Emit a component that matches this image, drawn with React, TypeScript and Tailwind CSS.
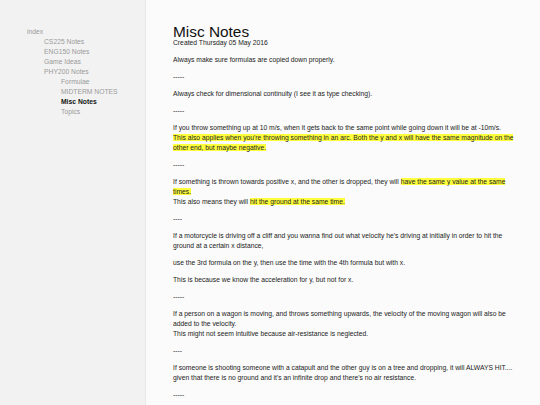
import React from 'react';

const Hl: React.FC<{ children: React.ReactNode }> = ({ children }) => (
    <span className="bg-[#ffff3c]">{children}</span>
);

const Sep: React.FC<{ text?: string }> = ({ text = '-----' }) => <p className="mt-[7px]">{text}</p>;

export default function App() {
    return (
        <div className="flex h-[405px] w-[540px] overflow-hidden bg-[#fbfbfb] font-['Liberation_Sans',Arial,sans-serif]">
            <aside className="w-[146px] shrink-0 border-r border-[#e8e8e8] bg-[#f2f2f2] pl-[27px] pt-[27px] text-[6.75px] leading-[10px] text-[#9a9a9a]">
                <div>index</div>
                <div className="ml-[17px]">
                    <div>CS225 Notes</div>
                    <div>ENG150 Notes</div>
                    <div>Game Ideas</div>
                    <div>PHY200 Notes</div>
                    <div className="ml-[17px]">
                        <div>Formulae</div>
                        <div>MIDTERM NOTES</div>
                        <div className="font-bold text-[#111]">Misc Notes</div>
                        <div>Topics</div>
                    </div>
                </div>
            </aside>
            <main className="flex-1 pl-[27px] pt-[25px] text-[6.75px] leading-[10px] text-[#222]">
                <h1 className="text-[15.4px] leading-[13px] text-[#111]">Misc Notes</h1>
                <div className="text-[6.75px] leading-[10px] text-[#222]">Created Thursday 05 May 2016</div>
                <div className="mt-[7px] w-[351px]">
                    <p>Always make sure formulas are copied down properly.</p>
                    <Sep />
                    <p className="mt-[7px]">Always check for dimensional continuity (I see it as type checking).</p>
                    <Sep />
                    <p className="mt-[7px]">
                        If you throw something up at 10 m/s, when it gets back to the same point while going down it will be at -10m/s.
                        <br />
                        <Hl>This also applies when you're throwing something in an arc. Both the y and x will have the same magnitude on the other end, but maybe negative.</Hl>
                    </p>
                    <Sep />
                    <p className="mt-[7px]">
                        If something is thrown towards positive x, and the other is dropped, they will <Hl>have the same y value at the same times.</Hl>
                        <br />
                        This also means they will <Hl>hit the ground at the same time.</Hl>
                    </p>
                    <Sep text="----" />
                    <p className="mt-[7px]">
                        If a motorcycle is driving off a cliff and you wanna find out what velocity he's driving at initially in order to hit the ground at a certain x distance,
                    </p>
                    <p className="mt-[7px]">use the 3rd formula on the y, then use the time with the 4th formula but with x.</p>
                    <p className="mt-[7px]">This is because we know the acceleration for y, but not for x.</p>
                    <Sep />
                    <p className="mt-[7px]">
                        If a person on a wagon is moving, and throws something upwards, the velocity of the moving wagon will also be added to the velocity.
                        <br />
                        This might not seem intuitive because air-resistance is neglected.
                    </p>
                    <Sep text="----" />
                    <p className="mt-[7px]">
                        If someone is shooting someone with a catapult and the other guy is on a tree and dropping, it will ALWAYS HIT.... given that there is no ground and it's an infinite drop and there's no air resistance.
                    </p>
                    <Sep />
                </div>
            </main>
        </div>
    );
}
